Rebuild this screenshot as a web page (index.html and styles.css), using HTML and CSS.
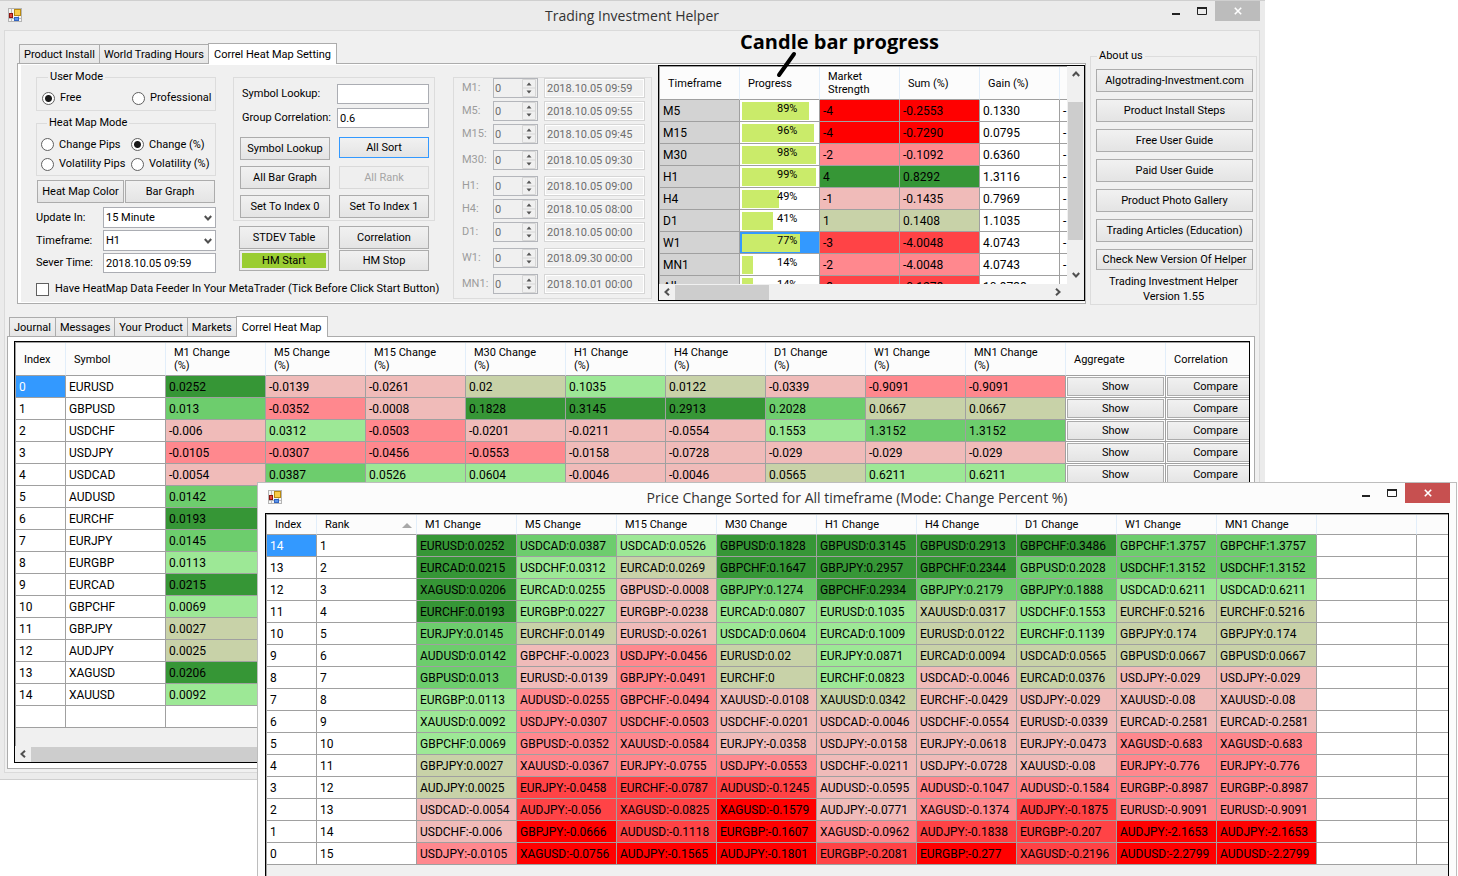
FILE: index.html
```html
<!DOCTYPE html>
<html lang="en">
<head>
<meta charset="utf-8">
<title>Trading Investment Helper</title>
<link rel="stylesheet" href="styles.css">
</head>
<body>
<svg class="sprite" aria-hidden="true">
  <symbol id="i-app" viewBox="0 0 14 14">
    <rect x=".5" y=".5" width="13" height="13" fill="#f4f4f4" stroke="#b4b4b4"/>
    <path d="M3.500 1v12M1 10.500h12M10.500 8v5" stroke="#bbb" fill="none"/>
    <rect x="6.500" y="1.500" width="6" height="6" fill="#f8cc48" stroke="#b98a10"/>
    <rect x="1.500" y="5.500" width="3" height="4" fill="#e04a3c" stroke="#8e1410"/>
    <rect x="6.500" y="9.500" width="4" height="3" fill="#5a94ea" stroke="#3264c0"/>
  </symbol>
  <symbol id="i-left" viewBox="0 0 8 8"><path d="M6 .8 2.500 4 6 7.200" fill="none" stroke="#505050" stroke-width="2"/></symbol>
  <symbol id="i-right" viewBox="0 0 8 8"><path d="M2 .8 5.500 4 2 7.200" fill="none" stroke="#505050" stroke-width="2"/></symbol>
  <symbol id="i-up" viewBox="0 0 8 8"><path d="M.8 6 4 2.500 7.200 6" fill="none" stroke="#505050" stroke-width="2"/></symbol>
  <symbol id="i-down" viewBox="0 0 8 8"><path d="M.8 2 4 5.500 7.200 2" fill="none" stroke="#505050" stroke-width="2"/></symbol>
  <symbol id="i-min" viewBox="0 0 10 10"><path d="M1 8h8" stroke="#222" stroke-width="2"/></symbol>
  <symbol id="i-max" viewBox="0 0 10 8"><path d="M0 1h10" stroke="#222" stroke-width="2"/><path d="M.5 1v6.500h9V1" fill="none" stroke="#222"/></symbol>
  <symbol id="i-close" viewBox="0 0 8 8"><path d="M.8 .8 7.200 7.200M7.200 .8 .8 7.200" stroke="#fff" stroke-width="1.600"/></symbol>
</svg>

<main class="desktop">
  <section class="window main-window" aria-label="Trading Investment Helper">
    <header class="titlebar">
      <svg class="app-icon"><use href="#i-app"/></svg>
      <h1>Trading Investment Helper</h1>
      <div class="controls">
        <button aria-label="Minimize"><svg class="min"><use href="#i-min"/></svg></button>
        <button aria-label="Maximize"><svg class="max"><use href="#i-max"/></svg></button>
        <button class="close" aria-label="Close"><svg class="x"><use href="#i-close"/></svg></button>
      </div>
    </header>
    <div class="client">
      <div class="top">
        <div class="setup">
          <nav class="tabs">
            <button class="tab">Product Install</button>
            <button class="tab">World Trading Hours</button>
            <button class="tab active">Correl Heat Map Setting</button>
          </nav>
          <div class="panel">
            <div class="settings">
              <div class="left">
                <div class="left-cols">
                  <div class="modes">
                    <fieldset class="group user">
                      <legend>User Mode</legend>
                      <label><input type="radio" name="user" checked>Free</label>
                      <label><input type="radio" name="user">Professional</label>
                    </fieldset>
                    <fieldset class="group heat">
                      <legend>Heat Map Mode</legend>
                      <label><input type="radio" name="heat">Change Pips</label>
                      <label><input type="radio" name="heat" checked>Change (%)</label>
                      <label><input type="radio" name="heat">Volatility Pips</label>
                      <label><input type="radio" name="heat">Volatility (%)</label>
                    </fieldset>
                    <div class="pair">
                      <button class="btn">Heat Map Color</button>
                      <button class="btn">Bar Graph</button>
                    </div>
                    <div class="field"><label for="upd">Update In:</label><span class="combo"><select id="upd"><option>15 Minute</option></select><svg><use href="#i-down"/></svg></span></div>
                    <div class="field"><label for="tf">Timeframe:</label><span class="combo"><select id="tf"><option>H1</option></select><svg><use href="#i-down"/></svg></span></div>
                    <div class="field"><label for="srv">Sever Time:</label><input class="text" id="srv" value="2018.10.05 09:59"></div>
                  </div>
                  <div class="actions">
                    <div class="box">
                      <div class="lookup"><label for="sym">Symbol Lookup:</label><input class="text" id="sym"></div>
                      <div class="lookup"><label for="grp">Group Correlation:</label><input class="text" id="grp" value="0.6"></div>
                      <div class="btn-grid">
                        <button class="btn">Symbol Lookup</button><button class="btn focus">All Sort</button>
                        <button class="btn">All Bar Graph</button><button class="btn" disabled>All Rank</button>
                        <button class="btn">Set To Index 0</button><button class="btn">Set To Index 1</button>
                      </div>
                    </div>
                    <div class="btn-grid tight">
                      <button class="btn">STDEV Table</button><button class="btn">Correlation</button>
                      <button class="btn short start">HM Start</button><button class="btn short">HM Stop</button>
                    </div>
                  </div>
                </div>
                <label class="feeder"><input type="checkbox">Have HeatMap Data Feeder In Your MetaTrader (Tick Before Click Start Button)</label>
              </div>
              <div class="times" id="times"></div>
              <div class="grid progress-grid">
                <div class="grid-main">
                  <div class="clip">
                    <table class="data" id="progress"></table>
                  </div>
                  <div class="vscroll"><svg><use href="#i-up"/></svg><span class="thumb"></span><svg><use href="#i-down"/></svg></div>
                </div>
                <div class="hscroll"><svg><use href="#i-left"/></svg><span class="thumb"></span><svg><use href="#i-right"/></svg></div>
              </div>
            </div>
          </div>
        </div>
        <fieldset class="group about">
          <legend>About us</legend>
          <div class="about-list">
            <button class="btn">Algotrading-Investment.com</button>
            <button class="btn">Product Install Steps</button>
            <button class="btn">Free User Guide</button>
            <button class="btn">Paid User Guide</button>
            <button class="btn">Product Photo Gallery</button>
            <button class="btn">Trading Articles (Education)</button>
            <button class="btn short">Check New Version Of Helper</button>
          </div>
          <p>Trading Investment Helper<br>Version 1.55</p>
        </fieldset>
      </div>
      <div class="bottom">
        <nav class="tabs">
          <button class="tab">Journal</button>
          <button class="tab">Messages</button>
          <button class="tab">Your Product</button>
          <button class="tab">Markets</button>
          <button class="tab active">Correl Heat Map</button>
        </nav>
        <div class="panel heat-panel">
          <div class="grid heat-grid">
            <div class="clip"><table class="data" id="heatmap"></table></div>
            <div class="hscroll"><svg><use href="#i-left"/></svg><span class="thumb wide"></span></div>
          </div>
        </div>
      </div>
    </div>
    <div class="note">
      <strong>Candle bar progress</strong>
      <svg viewBox="0 0 24 30"><path d="M19 6 4 27" stroke="#000" stroke-width="4" stroke-linecap="round"/></svg>
    </div>
  </section>

  <section class="window popup" aria-label="Price Change Sorted">
    <header class="titlebar">
      <svg class="app-icon"><use href="#i-app"/></svg>
      <h2>Price Change Sorted for All timeframe (Mode: Change Percent %)</h2>
      <div class="controls">
        <button aria-label="Minimize"><svg class="min"><use href="#i-min"/></svg></button>
        <button aria-label="Maximize"><svg class="max"><use href="#i-max"/></svg></button>
        <button class="close" aria-label="Close"><svg class="x"><use href="#i-close"/></svg></button>
      </div>
    </header>
    <div class="grid sorted-grid">
      <div class="clip"><table class="data" id="sorted"></table></div>
    </div>
  </section>
</main>
<script src="app.js"></script>
</body>
</html>
```
FILE: styles.css
```css
* { box-sizing: border-box; }
body { margin: 0; background: #fff; color: #000; font: 11px/14px Roboto, "Liberation Sans", sans-serif; }
button, input, select { font: inherit; color: inherit; margin: 0; }
h1, h2, p { margin: 0; font-weight: normal; }
.sprite { position: absolute; width: 0; height: 0; }
.desktop { position: relative; height: 100vh; min-height: 780px; overflow: hidden; }

/* windows */
.window { position: absolute; display: flex; flex-direction: column; }
.main-window { top: 0; left: 0; right: 193px; background: #ebebeb; border-top: 1px solid #cfcfcf; border-bottom: 1px solid #cfcfcf; padding: 0 5px 6px 4px; }
.popup { top: 482px; left: 257px; right: 1px; bottom: 0; background: #fcfcfc; border: 1px solid #bdbdbd; border-bottom: 0; padding: 0 7px; }
.titlebar { position: relative; height: 29px; display: flex; align-items: center; justify-content: center; }
.popup .titlebar { height: 30px; }
.titlebar h1, .titlebar h2 { font: 14px/20px "Open Sans", "Noto Sans", sans-serif; color: #333; }
.app-icon { position: absolute; left: 4px; top: 7px; width: 14px; height: 14px; }
.popup .app-icon { left: 3px; }
.controls { position: absolute; top: 0; right: 0; display: flex; align-items: flex-start; }
.controls button { width: 26px; height: 20px; padding: 0; border: 0; background: none; display: flex; align-items: center; justify-content: center; }
.controls .close { width: 45px; background: #bcbcbc; }
.popup .controls .close { background: #c75050; }
.popup .controls { right: -1px; }
.min { width: 10px; height: 10px; }
.max { width: 10px; height: 8px; }
.x { width: 8px; height: 8px; }
.client { background: #f0f0f0; border: 1px solid #dadada; padding: 0 4px 3px 2px; }

/* tabs and panels */
.top { display: flex; align-items: flex-start; gap: 4px; padding-left: 10px; margin-right: -2px; }
.setup { flex: 1; min-width: 0; padding-top: 12px; }
.tabs { display: flex; align-items: flex-end; padding-left: 2px; height: 21px; position: relative; margin-bottom: -1px; }
.tab { height: 19px; margin-bottom: 1px; padding: 1px 4px 0; border: 1px solid #acacac; border-bottom: 0; border-right-width: 0; background: linear-gradient(#f0f0f0, #e6e6e6); line-height: 17px; white-space: nowrap; }
.tab.active { height: 21px; margin-bottom: 0; padding: 0 5px; border-right-width: 1px; background: #fff; }
.panel { background: #fff; border: 1px solid #acacac; padding: 1px 0 1px 3px; }
.settings { background: #f0f0f0; display: flex; align-items: flex-start; padding-left: 15px; min-height: 237px; }
.left { padding-top: 5px; flex: none; width: 417px; }
.left-cols { display: flex; gap: 17px; align-items: flex-start; }
.modes { width: 180px; }
.group { border: 1px solid #dcdcdc; margin: 0; padding: 0; min-width: 0; }
.group legend { margin-left: 6px; padding: 0 2px; line-height: 14px; }
.user, .heat { display: grid; grid-template-columns: 90px 1fr; }
.user { height: 41px; padding: 2px 0 0 5px; align-items: center; }
.heat { height: 60px; margin-top: 5px; padding: 7px 0 3px 4px; row-gap: 4px; }
.group label, .feeder { display: flex; align-items: center; gap: 6px; white-space: nowrap; }
.group label { gap: 5px; }
input[type=radio], input[type=checkbox] { appearance: none; flex: none; width: 13px; height: 13px; border: 1px solid #606060; background: #fff; }
input[type=radio] { border-radius: 50%; }
input[type=radio]:checked { background: radial-gradient(circle, #1a1a1a 0 3px, #fff 4px); }
.btn { height: 23px; padding: 0; border: 1px solid #acacac; background: linear-gradient(#f1f1f1, #e4e4e4); text-align: center; white-space: nowrap; min-width: 0; }
.btn.focus { border-color: #3399ff; height: 21px; }
.btn:disabled { border-color: #d9d9d9; background: #efefef; color: #a5a5a5; }
.btn.short { height: 21px; }
.btn.start { background: #9acd32; box-shadow: inset 0 0 0 2px #ededed; }
.pair { display: grid; grid-template-columns: 87px 90px; gap: 1px; margin: 4px 1px; }
.field { display: grid; grid-template-columns: 67px 1fr; align-items: center; margin-bottom: 2px; }
.text, select { width: 100%; min-width: 0; height: 20px; border: 1px solid #abadb3; background: #fff; padding: 0 2px; }
.combo { position: relative; display: block; }
.combo select { appearance: none; display: block; height: 21px; }
.combo svg { position: absolute; right: 4px; top: 7px; width: 8px; height: 8px; pointer-events: none; }
.actions { width: 202px; padding-top: 7px; }
.box { border: 1px solid #dcdcdc; padding: 6px 5px 2px 6px; }
.lookup { display: grid; grid-template-columns: 95px 92px; justify-content: end; align-items: center; margin-bottom: 4px; white-space: nowrap; }
.btn-grid { display: grid; grid-template-columns: 90px 90px; gap: 6px 9px; margin-top: 9px; }
.btn-grid.tight { gap: 1px 10px; margin: 5px 6px 0; }
.feeder { margin-top: 7px; }

.times { flex: none; width: 199px; height: 222px; margin: 12px 6px 0 0; border: 1px solid #dcdcdc; color: #9c9c9c; }
.time { display: grid; grid-template-columns: 31px 51px 101px; padding-left: 8px; margin-bottom: 3px; align-items: center; }
.time.wide { margin-top: 6px; }
.spin { position: relative; display: block; width: 45px; }
.spin input { display: block; width: 100%; height: 20px; border: 1px solid #b4b6bb; background: #f0f0f0; padding: 0 1px; color: #6d6d6d; appearance: textfield; }
.spin input::-webkit-inner-spin-button { display: none; }
.spin svg { position: absolute; right: 2px; top: 1px; width: 14px; height: 18px; }
.time .date { height: 20px; width: 100%; border: 1px solid #d6d6d6; box-shadow: inset 0 0 0 1px #fff; background: #f0f0f0; color: #6d6d6d; padding: 0 2px; }

/* data grids */
.grid { border: 1px solid #000; background: #f0f0f0; min-width: 0; display: flex; flex-direction: column; }
.clip { overflow: hidden; flex: 1; min-width: 0; border: solid #a0a0a0; border-width: 1px 0 0 1px; }
.data { border-collapse: separate; border-spacing: 0; table-layout: fixed; width: 0; }
.data th { font-weight: normal; line-height: 13px; text-align: left; padding: 0 4px 0 8px; background: #fcfcfc; border-right: 1px solid #e2eefa; border-bottom: 1px solid #a0a0a0; height: 33px; }
.data td { height: 22px; padding: 0 2px 0 3px; border-right: 1px solid #a0a0a0; border-bottom: 1px solid #a0a0a0; background: #fff; font-size: 12px; white-space: nowrap; overflow: hidden; line-height: 14px; }
.data td.a { background: #369636; } .data td.b { background: #6dcd6d; } .data td.c { background: #9de896; } .data td.d { background: #c8d2a8; }
.data td.e { background: #f0bbb9; } .data td.f { background: #ff888e; } .data td.g { background: #ff4346; } .data td.h { background: #f00; }
.data td.sel { background: #3399ff; color: #fff; }
.data td.btn-cell { padding: 1px; font-size: 11px; }
.btn-cell .btn { display: block; width: 97px; height: 19px; }
.hscroll { height: 16px; display: flex; align-items: center; background: #f0f0f0; }
.hscroll svg, .vscroll svg { width: 8px; height: 8px; flex: none; margin: 4px; }
.hscroll .thumb { height: 15px; width: 94px; background: #cdcdcd; margin-right: auto; }
.hscroll .thumb.wide { width: auto; flex: 1; margin-right: 0; }
.progress-grid { flex: 1; height: 236px; }
.grid-main { display: flex; height: 218px; }
.progress-grid .hscroll { padding-right: 18px; }
.vscroll { width: 17px; padding-bottom: 1px; display: flex; flex-direction: column; align-items: center; justify-content: space-between; }
.vscroll .thumb { width: 15px; height: 138px; background: #cdcdcd; margin: 20px 0 auto; }
.progress-grid td:first-child { background: #d3d3d3; }
.data td.bar-cell { padding: 0 2px; font-size: 11px; }
.bar { position: relative; height: 18px; }
.bar i { display: block; height: 18px; background: #caeb6a; }
.bar span { position: absolute; left: 35px; top: 0; }
.data td.bar-sel { background: #3399ff; }
.bottom { margin-top: 11px; }
.heat-panel { padding: 4px 4px 5px 6px; }
.heat-grid .clip { height: 404px; flex: none; }
.sorted-grid { flex: 1; border-bottom: 0; }
.sorted-grid .data th { height: 20px; position: relative; }
.sort { position: absolute; right: 4px; top: 8px; border: 5px solid transparent; border-top: 0; border-bottom-color: #a8a8a8; }

/* about box */
.about { flex: none; width: 167px; margin-top: 18px; }
.about-list { display: flex; flex-direction: column; gap: 7px; padding: 6px 3px 0 5px; }
.about p { margin-top: 4px; line-height: 15px; text-align: center; }

.note { position: absolute; left: 740px; top: 29px; }
.note strong { font: bold 20px/24px "Open Sans", "Noto Sans", sans-serif; white-space: nowrap; }
.note svg { position: absolute; left: 35px; top: 18px; width: 24px; height: 30px; }
```
FILE: app.js
```js
// Each heat cell is written as a colour letter (a = strongest gain … h = strongest loss) followed by its text.
const heat = s => s ? `<td class="${s[0]}">${s.slice(1)}</td>` : '<td></td>';
const cols = ws => `<colgroup>${ws.map(w => `<col style="width:${w}px">`).join('')}</colgroup>`;
const head = hs => `<thead><tr>${hs.map(h => `<th>${h}</th>`).join('')}</tr></thead>`;
const fill = (id, ws, hs, rows) => {
  const t = document.getElementById(id);
  t.style.width = ws.reduce((a, b) => a + b) + 'px';
  t.innerHTML = cols(ws) + head(hs) + `<tbody>${rows.map(r => `<tr>${r}</tr>`).join('')}</tbody>`;
};
const frames = ['M1', 'M5', 'M15', 'M30', 'H1', 'H4', 'D1', 'W1', 'MN1'];

const times = ['05 09:59', '05 09:55', '05 09:45', '05 09:30', '05 09:00', '05 08:00', '05 00:00', '30 00:00', '01 00:00'];
document.getElementById('times').innerHTML = frames.map((f, i) => {
  const month = f === 'W1' ? '09' : '10';
  const wide = ['M30', 'H1', 'W1', 'MN1'].includes(f) ? ' wide' : '';
  return `<div class="time${wide}"><label for="n${f}">${f}:</label>
    <span class="spin"><input type="number" id="n${f}" value="0" disabled><svg viewBox="0 0 14 18"><path d="M.5.5h13v17H.5zM0 9h14" fill="none" stroke="#d6d6d6"/><path d="M4.500 6.500 7 3.500l2.500 3zM4.500 11.500 7 14.500l2.500-3z" fill="#555"/></svg></span>
    <input class="date" aria-label="${f} time" value="2018.${month}.${times[i]}" disabled></div>`;
}).join('');

const progress = [
  ['M5', 89, 'h-4', 'h-0.2553', '0.1330'], ['M15', 96, 'h-4', 'h-0.7290', '0.0795'],
  ['M30', 98, 'f-2', 'f-0.1092', '0.6360'], ['H1', 99, 'a4', 'a0.8292', '1.3116'],
  ['H4', 49, 'e-1', 'e-0.1435', '0.7969'], ['D1', 41, 'd1', 'd0.1408', '1.1035'],
  ['W1', 77, 'g-3', 'g-4.0048', '4.0743'], ['MN1', 14, 'f-2', 'f-4.0048', '4.0743'],
  ['All', 14, 'g-3', 'g-0.1278', '10.9738']
];
fill('progress', [80, 80, 80, 80, 80, 80], ['Timeframe', 'Progress', 'Market<br>Strength', 'Sum (%)', 'Gain (%)', ''],
  progress.map(([f, p, m, s, g]) => `<td>${f}</td><td class="bar-cell${p === 77 ? ' bar-sel' : ''}"><div class="bar"><i style="width:${p}%"></i><span>${p}%</span></div></td>${heat(m)}${heat(s)}<td>${g}</td><td>-</td>`));

const market = [
  ['EURUSD', 'a0.0252 e-0.0139 e-0.0261 d0.02 c0.1035 d0.0122 e-0.0339 f-0.9091 f-0.9091'],
  ['GBPUSD', 'b0.013 f-0.0352 e-0.0008 a0.1828 a0.3145 a0.2913 b0.2028 d0.0667 d0.0667'],
  ['USDCHF', 'e-0.006 c0.0312 f-0.0503 e-0.0201 e-0.0211 e-0.0554 c0.1553 b1.3152 b1.3152'],
  ['USDJPY', 'f-0.0105 f-0.0307 f-0.0456 f-0.0553 e-0.0158 e-0.0728 e-0.029 e-0.029 e-0.029'],
  ['USDCAD', 'e-0.0054 b0.0387 c0.0526 c0.0604 e-0.0046 e-0.0046 d0.0565 c0.6211 c0.6211'],
  ['AUDUSD', 'b0.0142'], ['EURCHF', 'a0.0193'], ['EURJPY', 'b0.0145'], ['EURGBP', 'c0.0113'], ['EURCAD', 'a0.0215'],
  ['GBPCHF', 'c0.0069'], ['GBPJPY', 'd0.0027'], ['AUDJPY', 'd0.0025'], ['XAGUSD', 'a0.0206'], ['XAUUSD', 'c0.0092'], ['', '']
];
fill('heatmap', [50, 100, ...Array(11).fill(100)],
  ['Index', 'Symbol', ...frames.map(f => `${f} Change<br>(%)`), 'Aggregate', 'Correlation'],
  market.map(([sym, v], i) => {
    const cells = v.split(' ');
    const btns = i < 5 ? ['Show', 'Compare'].map(b => `<td class="btn-cell"><button class="btn">${b}</button></td>`).join('') : '<td></td><td></td>';
    return `<td${i ? '' : ' class="sel"'}>${sym ? i : ''}</td><td>${sym}</td>${frames.map((_, k) => heat(cells[k])).join('')}${btns}`;
  }));

const sorted = `
aEURUSD:0.0252 bUSDCAD:0.0387 cUSDCAD:0.0526 aGBPUSD:0.1828 aGBPUSD:0.3145 aGBPUSD:0.2913 aGBPCHF:0.3486 bGBPCHF:1.3757
aEURCAD:0.0215 cUSDCHF:0.0312 dEURCAD:0.0269 aGBPCHF:0.1647 aGBPJPY:0.2957 aGBPCHF:0.2344 bGBPUSD:0.2028 bUSDCHF:1.3152
aXAGUSD:0.0206 cEURCAD:0.0255 eGBPUSD:-0.0008 bGBPJPY:0.1274 aGBPCHF:0.2934 bGBPJPY:0.2179 bGBPJPY:0.1888 cUSDCAD:0.6211
aEURCHF:0.0193 cEURGBP:0.0227 eEURGBP:-0.0238 cEURCAD:0.0807 cEURUSD:0.1035 dXAUUSD:0.0317 cUSDCHF:0.1553 dEURCHF:0.5216
bEURJPY:0.0145 dEURCHF:0.0149 eEURUSD:-0.0261 cUSDCAD:0.0604 cEURCAD:0.1009 dEURUSD:0.0122 cEURCHF:0.1139 dGBPJPY:0.174
bAUDUSD:0.0142 eGBPCHF:-0.0023 fUSDJPY:-0.0456 dEURUSD:0.02 cEURJPY:0.0871 dEURCAD:0.0094 dUSDCAD:0.0565 dGBPUSD:0.0667
bGBPUSD:0.013 eEURUSD:-0.0139 fGBPJPY:-0.0491 dEURCHF:0 cEURCHF:0.0823 eUSDCAD:-0.0046 dEURCAD:0.0376 eUSDJPY:-0.029
cEURGBP:0.0113 fAUDUSD:-0.0255 fGBPCHF:-0.0494 eXAUUSD:-0.0108 dXAUUSD:0.0342 eEURCHF:-0.0429 eUSDJPY:-0.029 eXAUUSD:-0.08
cXAUUSD:0.0092 fUSDJPY:-0.0307 fUSDCHF:-0.0503 eUSDCHF:-0.0201 eUSDCAD:-0.0046 eUSDCHF:-0.0554 eEURUSD:-0.0339 eEURCAD:-0.2581
cGBPCHF:0.0069 fGBPUSD:-0.0352 fXAUUSD:-0.0584 eEURJPY:-0.0358 eUSDJPY:-0.0158 eEURJPY:-0.0618 eEURJPY:-0.0473 fXAGUSD:-0.683
dGBPJPY:0.0027 fXAUUSD:-0.0367 fEURJPY:-0.0755 fUSDJPY:-0.0553 eUSDCHF:-0.0211 eUSDJPY:-0.0728 eXAUUSD:-0.08 fEURJPY:-0.776
dAUDJPY:0.0025 gEURJPY:-0.0458 gEURCHF:-0.0787 gAUDUSD:-0.1245 eAUDUSD:-0.0595 fAUDUSD:-0.1047 fAUDUSD:-0.1584 fEURGBP:-0.8987
eUSDCAD:-0.0054 gAUDJPY:-0.056 gXAGUSD:-0.0825 hXAGUSD:-0.1579 eAUDJPY:-0.0771 fXAGUSD:-0.1374 gAUDJPY:-0.1875 fEURUSD:-0.9091
eUSDCHF:-0.006 hGBPJPY:-0.0666 gAUDUSD:-0.1118 hEURGBP:-0.1607 fXAGUSD:-0.0962 gAUDJPY:-0.1838 gEURGBP:-0.207 hAUDJPY:-2.1653
fUSDJPY:-0.0105 hXAGUSD:-0.0756 hAUDJPY:-0.1565 hAUDJPY:-0.1801 gEURGBP:-0.2081 hEURGBP:-0.277 gXAGUSD:-0.2196 hAUDUSD:-2.2799`.trim().split('\n');
fill('sorted', [50, 100, ...Array(11).fill(100)],
  ['Index', 'Rank<span class="sort"></span>', ...frames.map(f => `${f} Change`), '', ''],
  sorted.map((line, i) => {
    const c = line.split(' ');
    // The weekly and monthly rankings are identical for this session.
    return `<td${i ? '' : ' class="sel"'}>${14 - i}</td><td>${i + 1}</td>${[...c, c[7]].map(heat).join('')}<td></td><td></td>`;
  }));
```
